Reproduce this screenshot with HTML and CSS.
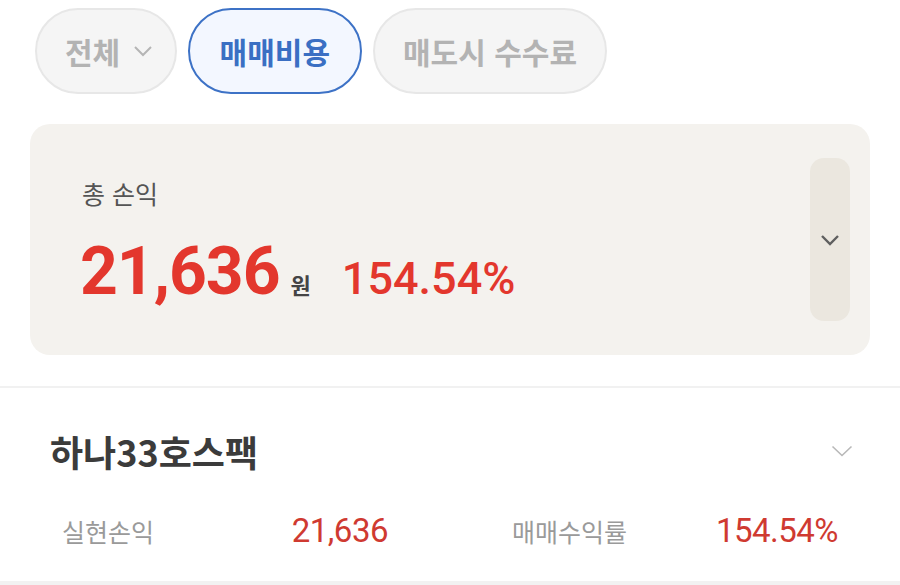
FILE: index.html
```html
<!DOCTYPE html>
<html lang="ko">
<head>
<meta charset="utf-8">
<link rel="stylesheet" href="styles.css">
</head>
<body>
<div class="filters">
  <div class="chip chip-all">전체 <svg class="chip-chev" width="20" height="12" viewBox="0 0 20 12"><path d="M2 2 L10 10 L18 2" fill="none" stroke="#b5b5b5" stroke-width="2"/></svg></div>
  <div class="chip chip-active">매매비용</div>
  <div class="chip chip-fee">매도시 수수료</div>
</div>

<div class="summary">
  <div class="summary-body">
    <div class="summary-label">총 손익</div>
    <div class="summary-values">
      <span class="big-num">21,636</span><span class="won">원</span><span class="big-pct">154.54%</span>
    </div>
  </div>
  <div class="expand-btn">
    <svg width="20" height="12" viewBox="0 0 20 12"><path d="M2 2 L10 10 L18 2" fill="none" stroke="#5f5f5f" stroke-width="2.4"/></svg>
  </div>
</div>

<div class="divider"></div>

<div class="item">
  <div class="item-head">
    <div class="item-title">하나33호스팩</div>
    <svg width="22" height="12" viewBox="0 0 22 12"><path d="M1.5 1.5 L11 10.5 L20.5 1.5" fill="none" stroke="#b8b8b8" stroke-width="1.6"/></svg>
  </div>
  <div class="item-row">
    <div class="stat"><span class="stat-label">실현손익</span><span class="stat-value">21,636</span></div>
    <div class="stat"><span class="stat-label">매매수익률</span><span class="stat-value">154.54%</span></div>
  </div>
</div>
</body>
</html>
```

FILE: styles.css
```css
html, body {
  margin: 0;
  padding: 0;
  background: #ffffff;
  font-family: "Noto Sans CJK KR", "Noto Sans", sans-serif;
}

.filters {
  display: flex;
  gap: 11px;
  padding: 8px 0 0 35px;
}

.chip {
  box-sizing: border-box;
  height: 86px;
  display: flex;
  align-items: center;
  padding: 0 30px;
  border: 2px solid #e7e7e7;
  border-radius: 43px;
  background: #f5f5f5;
  color: #b3b3b3;
  font-size: 30px;
  font-weight: 700;
  white-space: pre;
}

.chip-all {
  padding: 0 22px 0 28px;
}

.chip-fee {
  padding: 0 28px;
}

.chip-chev {
  margin-left: 4px;
}

.chip-active {
  border-color: #3d72c6;
  background: #f3f7ff;
  color: #3a6fc3;
}

.summary {
  box-sizing: border-box;
  height: 231px;
  margin: 30px 30px 0;
  background: #f4f2ee;
  border-radius: 20px;
  display: flex;
  justify-content: space-between;
  padding: 34px 20px 34px 50px;
}

.summary-body {
  display: flex;
  flex-direction: column;
  padding-top: 20px;
}

.summary-label {
  font-size: 25px;
  line-height: 30px;
  color: #555555;
  padding-left: 2px;
}

.summary-values {
  display: flex;
  align-items: baseline;
  margin-top: 24px;
  font-family: Roboto, "Noto Sans CJK KR", sans-serif;
}

.big-num {
  font-size: 66px;
  font-weight: 700;
  color: #e3372d;
  letter-spacing: -1px;
  line-height: 80px;
}

.won {
  font-family: "Noto Sans CJK KR", sans-serif;
  font-size: 22px;
  font-weight: 700;
  color: #444444;
  margin-left: 11px;
}

.big-pct {
  font-size: 45px;
  font-weight: 500;
  color: #e3372d;
  margin-left: 31px;
}

.expand-btn {
  width: 40px;
  border-radius: 14px;
  background: #ebe7df;
  display: flex;
  align-items: center;
  justify-content: center;
}

.divider {
  margin-top: 31px;
  height: 2px;
  background: #f1f1f1;
}

.item {
  border-bottom: 4px solid #f2f2f2;
}

.item-head {
  display: flex;
  justify-content: space-between;
  align-items: center;
  padding: 38px 47px 0 50px;
}

.item-title {
  font-size: 36px;
  font-weight: 700;
  color: #3b3b3b;
  line-height: 50px;
}

.item-row {
  display: grid;
  grid-template-columns: 1fr 1fr;
  column-gap: 124px;
  padding: 35px 62px 31px;
}

.stat {
  display: flex;
  justify-content: space-between;
  align-items: baseline;
}

.stat-label {
  font-size: 25px;
  color: #9a9a9a;
}

.stat-value {
  font-family: Roboto, sans-serif;
  font-size: 33px;
  color: #cf3a31;
  letter-spacing: -0.5px;
}
```
